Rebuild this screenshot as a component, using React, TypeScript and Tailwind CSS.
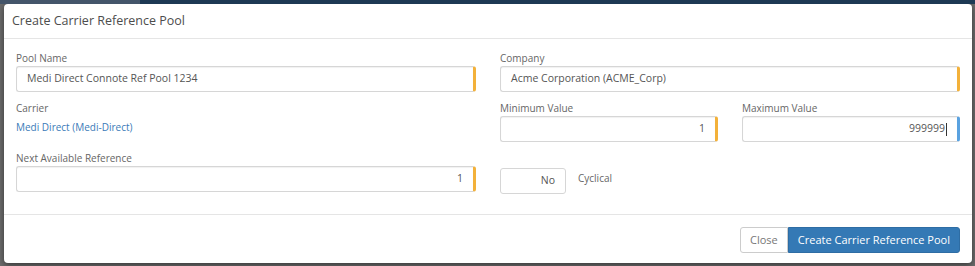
const labelCls = 'block h-4 text-[10px] leading-4 text-[#666]';
const inputBase =
    'flex h-[26px] items-center rounded-[3px] border border-[#d6d6d6] bg-white px-[10px] text-[10.5px] text-[#555] shadow-[inset_0_1px_1px_rgba(0,0,0,0.06)]';

interface FieldProps {
    label: string;
    value: string;
    right?: boolean;
    focused?: boolean;
}

const Field = ({ label, value, right, focused }: FieldProps) => (
    <div className="flex flex-col">
        <label className={labelCls}>{label}</label>
        <div
            className={`${inputBase} ${right ? 'justify-end' : ''} ${
                focused
                    ? 'border-[#8dbbe6] border-r-[3px] border-r-[#5aa2e0] shadow-[0_0_3px_rgba(102,175,233,0.5)]'
                    : 'border-r-[3px] border-r-[#f3b13a]'
            }`}
        >
            <span>{value}</span>
            {focused && <span className="ml-px h-[13px] w-px bg-[#333]" />}
        </div>
    </div>
);

const App = () => {
    return (
        <div className="h-[266px] w-[975px] overflow-hidden bg-[#6c6c6c] font-['Open_Sans',sans-serif]">
            {/* page behind the modal */}
            <div className="flex h-[4px]">
                <div className="w-[140px] bg-[#44556a]" />
                <div className="flex-1 bg-[#1d3954]" />
            </div>

            <div className="ml-[4px] flex h-[259px] w-[968px] flex-col rounded-[4px] bg-white shadow-[0_2px_6px_rgba(0,0,0,0.5)]">
                <div className="flex h-[35px] items-center border-b border-[#e5e5e5] px-[8px]">
                    <h1 className="text-[12.5px] text-[#4d4d4d]">Create Carrier Reference Pool</h1>
                </div>

                <div className="grid grid-cols-2 gap-x-[24px] gap-y-[8px] px-[12px] pt-[11px] pb-[22px]">
                    <Field label="Pool Name" value="Medi Direct Connote Ref Pool 1234" />
                    <Field label="Company" value="Acme Corporation (ACME_Corp)" />

                    <div className="flex h-[42px] flex-col">
                        <label className={labelCls}>Carrier</label>
                        <a className="mt-[3px] text-[10px] leading-4 text-[#3b7bb8]">Medi Direct (Medi-Direct)</a>
                    </div>
                    <div className="grid grid-cols-2 gap-x-[24px]">
                        <Field label="Minimum Value" value="1" right />
                        <Field label="Maximum Value" value="999999" right focused />
                    </div>

                    <Field label="Next Available Reference" value="1" right />
                    <div className="flex items-end">
                        <div className="mb-[-2px] flex h-[26px] w-[66px] items-center justify-end rounded-[3px] border border-[#d6d6d6] bg-white pr-[10px] text-[10.5px] text-[#555]">
                            No
                        </div>
                        <span className="mb-[6px] ml-[12px] text-[10px] text-[#666]">Cyclical</span>
                    </div>
                </div>

                <div className="flex flex-1 items-start justify-end border-t border-[#e5e5e5] px-[12px] pt-[12px]">
                    <button className="flex h-[26px] items-center rounded-l-[3px] border border-[#ccc] bg-white px-[9px] text-[11px] text-[#777]">
                        Close
                    </button>
                    <button className="flex h-[26px] items-center rounded-r-[3px] border border-[#2e6da4] bg-[#3479b5] px-[9px] text-[11px] text-white">
                        Create Carrier Reference Pool
                    </button>
                </div>
            </div>
        </div>
    );
};

export default App;
